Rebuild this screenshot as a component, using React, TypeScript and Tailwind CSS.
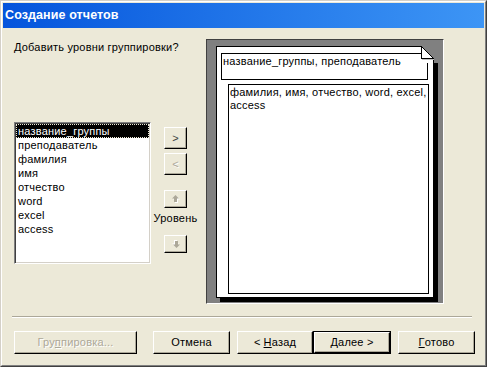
import React from 'react';

const items = ['название_группы', 'преподаватель', 'фамилия', 'имя', 'отчество', 'word', 'excel', 'access'];

const raised =
    'bg-[#ECE9D8] border border-t-white border-l-white border-r-black border-b-black shadow-[inset_-1px_-1px_0_#ACA899] flex items-center justify-center';

const Arrow: React.FC<{ down?: boolean }> = ({ down }) => (
    <svg width="8" height="8" viewBox="0 0 8 8" className={down ? 'rotate-180' : ''}>
        <path d="M4.5 1 L8 4.5 H6 V8 H3 V4.5 H1 Z" fill="#ffffff" />
        <path d="M3.5 0 L7 3.5 H5 V7 H2 V3.5 H0 Z" fill="#ACA899" />
    </svg>
);

const Btn: React.FC<{ w: string; disabled?: boolean; children: React.ReactNode }> = ({ w, disabled, children }) => (
    <div className={`${raised} ${w} h-[23px] ${disabled ? 'text-[#ACA899] [text-shadow:1px_1px_0_#fff]' : 'text-black'}`}>
        {children}
    </div>
);

export default function App() {
    return (
        <div className="w-[487px] h-[367px] bg-[#ECE9D8] border border-t-[#D4D0C8] border-l-[#D4D0C8] border-r-[#404040] border-b-[#404040] font-['Liberation_Sans',Arial,sans-serif] text-[11px] leading-[13px] tracking-[0.2px] text-black overflow-hidden">
            <div className="h-full border border-t-white border-l-white border-r-[#808080] border-b-[#808080] p-px flex flex-col">
                {/* caption */}
                <div className="h-[25px] shrink-0 bg-linear-to-r from-[#0554DC] to-[#3D95F5] text-white font-bold text-[12.5px] tracking-[0.1px] pl-[2px] flex items-center">
                    Создание отчетов
                </div>

                {/* main area */}
                <div className="h-[288px] shrink-0 flex pl-[11px]">
                    <div className="w-[192px] flex flex-col">
                        <div className="mt-[13px]">Добавить уровни группировки?</div>
                        <div className="flex mt-[68px]">
                            <div className="w-[137px] h-[142px] bg-white border border-t-[#808080] border-l-[#808080] border-r-white border-b-white shadow-[inset_1px_1px_0_#404040,inset_-1px_-1px_0_#D4D0C8] p-px">
                                {items.map((it, i) => (
                                    <div
                                        key={it}
                                        className={`h-[14px] leading-[14px] pl-[2px] whitespace-nowrap ${i === 0 ? 'bg-black text-white outline outline-1 outline-dotted outline-[#ECE9D8] -outline-offset-1' : ''}`}
                                    >
                                        {it}
                                    </div>
                                ))}
                            </div>
                            <div className="ml-[13px] pt-[5px] w-[23px] flex flex-col items-center">
                                <div className={`${raised} w-[23px] h-[22px] text-[#404040]`}>&gt;</div>
                                <div className={`${raised} w-[23px] h-[22px] mt-[4px] text-[#ACA899] [text-shadow:1px_1px_0_#fff]`}>&lt;</div>
                                <div className={`${raised} w-[23px] h-[18px] mt-[15px]`}>
                                    <Arrow />
                                </div>
                                <div className="mt-[4px] whitespace-nowrap">Уровень</div>
                                <div className={`${raised} w-[23px] h-[18px] mt-[10px]`}>
                                    <Arrow down />
                                </div>
                            </div>
                        </div>
                    </div>

                    {/* preview */}
                    <div className="mt-[11px] w-[238px] h-[265px] bg-[#808080] border border-t-[#404040] border-l-[#404040] border-r-white border-b-white pl-[9px] pt-[6px]">
                        <div className="relative w-[218px] h-[252px] bg-white border border-black shadow-[4px_4px_0_#000]">
                            <div className="ml-[4px] mt-[6px] w-[207px] h-[27px] border border-black px-px pt-px whitespace-nowrap">
                                название_группы, преподаватель
                            </div>
                            <div className="ml-[11px] mt-[4px] w-[201px] h-[210px] border border-black px-px pt-px">
                                фамилия, имя, отчество, word, excel, access
                            </div>
                            <svg
                                width="17"
                                height="17"
                                viewBox="0 0 17 17"
                                shapeRendering="crispEdges"
                                className="absolute top-[-1px] right-[-5px]"
                            >
                                <rect x="0" y="0" width="17" height="17" fill="#808080" />
                                <rect x="0" y="12" width="12" height="5" fill="#ffffff" />
                                <rect x="12" y="12" width="1" height="5" fill="#000000" />
                                <polygon points="0,0 13,13 0,13" fill="#ffffff" shapeRendering="auto" />
                                <line x1="0.5" y1="0.5" x2="12.5" y2="12.5" stroke="#000" strokeWidth="1" shapeRendering="auto" />
                                <rect x="0" y="0" width="1" height="13" fill="#000000" />
                                <rect x="0" y="12" width="13" height="1" fill="#000000" />
                                <rect x="1" y="13" width="12" height="1" fill="#C0C0C0" />
                            </svg>
                        </div>
                    </div>
                </div>

                {/* separator */}
                <div className="ml-[9px] w-[460px] h-[2px] border-t border-t-[#ACA899] border-b border-b-white shrink-0" />

                {/* buttons */}
                <div className="mt-[13px] pl-[11px] flex">
                    <Btn w="w-[123px]" disabled>
                        Гру<u>п</u>пировка...
                    </Btn>
                    <div className="ml-[16px]">
                        <Btn w="w-[77px]">Отмена</Btn>
                    </div>
                    <div className="ml-[7px]">
                        <Btn w="w-[76px]">
                            &lt; <u className="ml-[3px]">Н</u>азад
                        </Btn>
                    </div>
                    <div className="w-[78px] h-[23px] border border-black">
                        <div className={`${raised} w-full h-full`}>
                            <u>Д</u>алее &gt;
                        </div>
                    </div>
                    <div className="ml-[7px]">
                        <Btn w="w-[77px]">
                            <u>Г</u>отово
                        </Btn>
                    </div>
                </div>
            </div>
        </div>
    );
}
